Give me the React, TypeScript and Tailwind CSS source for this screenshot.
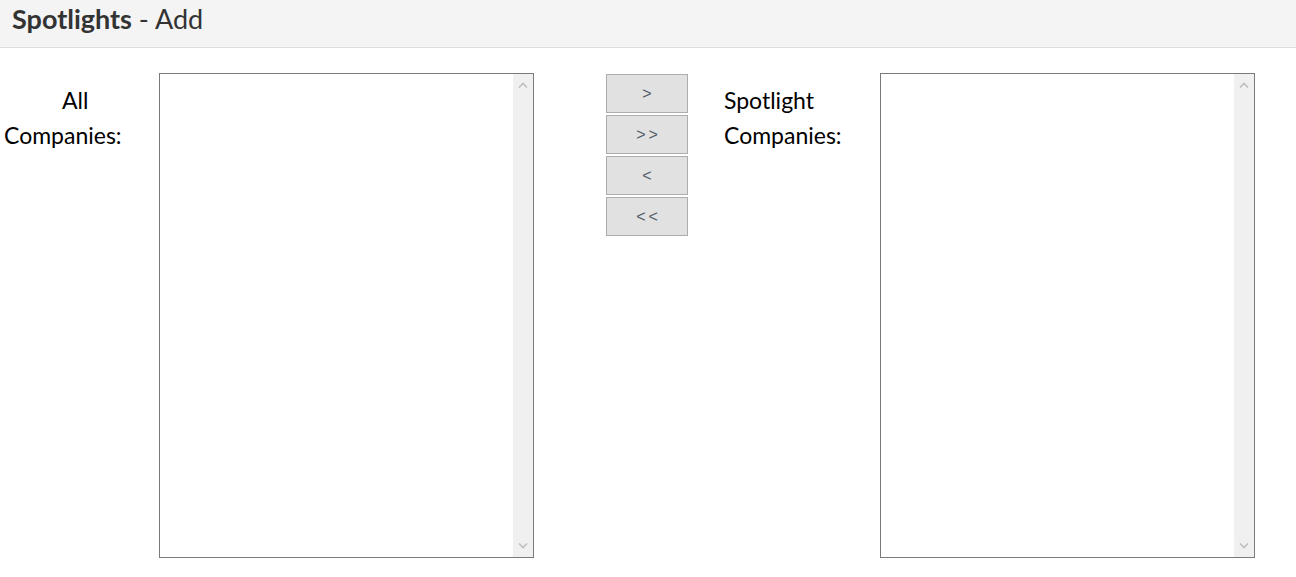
function Chevron({ up }: { up?: boolean }) {
  return (
    <svg width="10" height="6" viewBox="0 0 10 6" fill="none">
      <polyline
        points={up ? '1,5.5 5,1.5 9,5.5' : '1,0.5 5,4.5 9,0.5'}
        stroke="#bfbfbf"
        strokeWidth="1.6"
      />
    </svg>
  )
}

function ListBox() {
  return (
    <div className="w-[375px] h-[485px] border border-[#7a7a7a] bg-white flex justify-end">
      <div className="w-[20px] h-full bg-[#f0f0f0] flex flex-col items-center justify-between pt-[8px] pb-[8px]">
        <Chevron up />
        <Chevron />
      </div>
    </div>
  )
}

function MoveButton({ label }: { label: string }) {
  return (
    <button
      type="button"
      className="w-[82px] h-[39px] bg-[#e1e1e1] border border-[#adadad] text-[#4f5a66] text-[16px] tracking-[3px] pl-[3px] font-['Liberation_Sans',sans-serif]"
    >
      {label}
    </button>
  )
}

export default function App() {
  return (
    <div className="w-[1296px] h-[577px] bg-white font-['Lato',sans-serif]">
      {/* Header */}
      <div className="h-[48px] bg-[#f4f4f4] border-b border-[#dddddd] px-[12px] flex items-center">
        <h1 className="text-[27px] text-[#333333] leading-none -mt-[11px]">
          <span className="font-bold">Spotlights</span> - Add
        </h1>
      </div>

      {/* Picker */}
      <div className="flex pt-[25px]">
        <div className="w-[159px] pt-[10px] text-[23px] leading-[35px] text-black">
          <div className="pl-[62px]">All</div>
          <div className="pl-[4px]">Companies:</div>
        </div>
        <ListBox />
        <div className="ml-[72px] mt-[1px] flex flex-col gap-[2px]">
          <MoveButton label=">" />
          <MoveButton label=">>" />
          <MoveButton label="<" />
          <MoveButton label="<<" />
        </div>
        <div className="w-[156px] ml-[36px] pt-[10px] text-[23px] leading-[35px] text-black">
          <div>Spotlight</div>
          <div>Companies:</div>
        </div>
        <ListBox />
      </div>
    </div>
  )
}
